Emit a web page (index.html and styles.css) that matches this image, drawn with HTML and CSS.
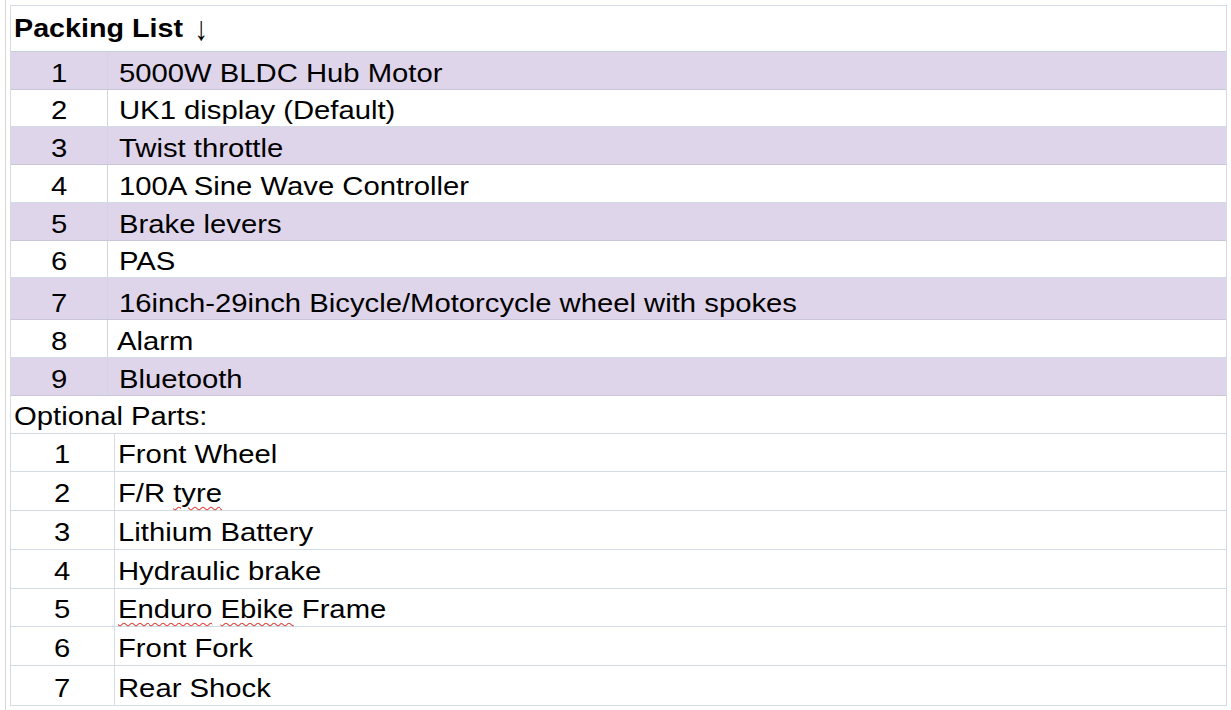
FILE: index.html
```html
<!DOCTYPE html>
<html>
<head>
<meta charset="utf-8">
<link rel="stylesheet" href="styles.css">
</head>
<body>
<div class="page">
  <div class="gutter"></div>
  <div class="sheet">
    <div class="row head"><div class="full bold"><span class="t">Packing List <span class="arrow">↓</span></span></div></div>
    <div class="row a p"><div class="num"><span class="t">1</span></div><div class="txt"><span class="t">5000W BLDC Hub Motor</span></div></div>
    <div class="row a"><div class="num"><span class="t">2</span></div><div class="txt"><span class="t">UK1 display (Default)</span></div></div>
    <div class="row a p"><div class="num"><span class="t">3</span></div><div class="txt"><span class="t">Twist throttle</span></div></div>
    <div class="row a"><div class="num"><span class="t">4</span></div><div class="txt"><span class="t">100A Sine Wave Controller</span></div></div>
    <div class="row a p"><div class="num"><span class="t">5</span></div><div class="txt"><span class="t">Brake levers</span></div></div>
    <div class="row a"><div class="num"><span class="t">6</span></div><div class="txt"><span class="t">PAS</span></div></div>
    <div class="row a p tall"><div class="num"><span class="t">7</span></div><div class="txt"><span class="t">16inch-29inch Bicycle/Motorcycle wheel with spokes</span></div></div>
    <div class="row a"><div class="num"><span class="t">8</span></div><div class="txt tight"><span class="t">Alarm</span></div></div>
    <div class="row a p"><div class="num"><span class="t">9</span></div><div class="txt"><span class="t">Bluetooth</span></div></div>
    <div class="row opt-title"><div class="full"><span class="t">Optional Parts:</span></div></div>
    <div class="row b"><div class="num"><span class="t">1</span></div><div class="txt"><span class="t">Front Wheel</span></div></div>
    <div class="row b"><div class="num"><span class="t">2</span></div><div class="txt"><span class="t">F/R <span class="sp">tyre</span></span></div></div>
    <div class="row b"><div class="num"><span class="t">3</span></div><div class="txt"><span class="t">Lithium Battery</span></div></div>
    <div class="row b"><div class="num"><span class="t">4</span></div><div class="txt"><span class="t">Hydraulic brake</span></div></div>
    <div class="row b"><div class="num"><span class="t">5</span></div><div class="txt"><span class="t"><span class="sp">Enduro</span> <span class="sp">Ebike</span> Frame</span></div></div>
    <div class="row b"><div class="num"><span class="t">6</span></div><div class="txt"><span class="t">Front Fork</span></div></div>
    <div class="row b last"><div class="num"><span class="t">7</span></div><div class="txt"><span class="t">Rear Shock</span></div></div>
  </div>
</div>
</body>
</html>
```

FILE: styles.css
```css
html, body {
  margin: 0;
  padding: 0;
  background: #ffffff;
}
body {
  font-family: "Liberation Sans", Arial, sans-serif;
  color: #000;
}
.page {
  display: flex;
  align-items: stretch;
  height: 710px;
}
.gutter {
  width: 3px;
  margin-left: 2px;
  border-right: 1px solid #d6d6d6;
  margin-right: 4px;
}
.sheet {
  margin-top: 5px;
  width: 1215px;
  height: 699px;
  border: 1px solid #d3dce4;
  border-bottom-color: #d7dfe6;
  display: flex;
  flex-direction: column;
}
.t {
  display: inline-block;
  transform: scaleX(1.125);
  transform-origin: left center;
  white-space: nowrap;
}
.num .t {
  transform-origin: center center;
}
.row {
  display: grid;
  border-bottom: 1px solid #d3dce4;
  font-size: 26px;
  line-height: 29px;
  box-sizing: border-box;
}
.row.last { border-bottom: none; }
.row.head {
  height: 46px;
  grid-template-columns: 1fr;
  align-items: center;
  border-bottom-color: #c5d0da;
}
.row.head .full {
  padding: 0 0 3px 3px;
  font-size: 25.5px;
}
.arrow {
  font-weight: normal;
  font-family: "Liberation Sans", sans-serif;
  font-size: 34px;
  line-height: 29px;
  display: inline-block;
  transform: scaleX(0.7) translateY(3px);
  margin-left: 1px;
}
.bold { font-weight: bold; }
.row.a {
  height: 38px;
  grid-template-columns: 97px 1fr;
  align-items: end;
}
.row.a.tall { height: 42px; }
.row.p {
  background: #dfd5ea;
  border-bottom-color: #c9c6d8;
}
.row.a .num {
  border-right: 1px solid #cfd6e2;
  height: 100%;
  display: flex;
  align-items: flex-end;
  justify-content: center;
  padding-bottom: 1px;
  box-sizing: border-box;
}
.row.a .txt {
  padding: 0 0 1px 11px;
}
.row.a .txt.tight { padding-left: 9px; }
.row.opt-title {
  height: 38px;
  grid-template-columns: 1fr;
  align-items: end;
}
.row.opt-title .full {
  padding: 0 0 2px 3px;
}
.row.b {
  height: 39px;
  grid-template-columns: 104px 1fr;
  align-items: end;
}
.row.b .num {
  border-right: 1px solid #d6dde6;
  height: 100%;
  display: flex;
  align-items: flex-end;
  justify-content: center;
  padding-bottom: 2px;
  box-sizing: border-box;
}
.row.b .txt {
  padding: 0 0 2px 3px;
}
.sp {
  text-decoration: underline wavy #e0403a;
  text-decoration-thickness: 1px;
  text-underline-offset: 4px;
}
```
